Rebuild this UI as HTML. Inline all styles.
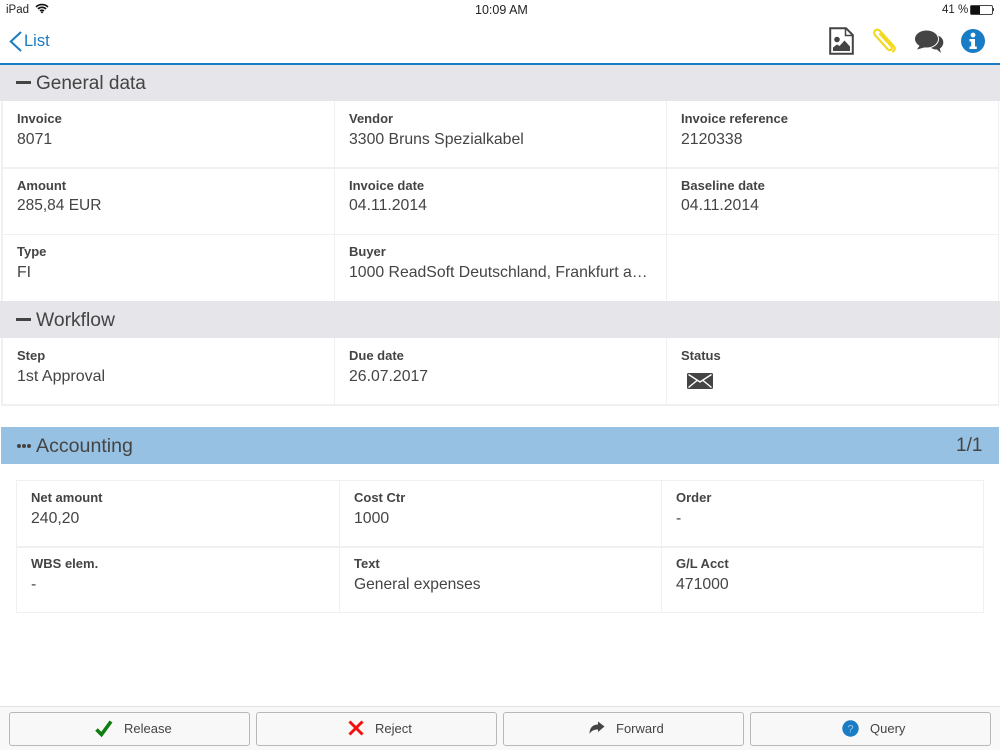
<!DOCTYPE html>
<html><head><meta charset="utf-8"><style>
html,body{margin:0;padding:0;background:#fff}
#p{position:relative;width:1000px;height:750px;overflow:hidden;background:#fff;font-family:"Liberation Sans",sans-serif;color:#444}
#p div,#p svg{position:absolute}
.t{white-space:nowrap}
.l{font-size:13px;font-weight:bold;line-height:16px;color:#444;white-space:nowrap}
.v{font-size:15.8px;line-height:20px;color:#444;white-space:nowrap}
.h{font-size:19.3px;line-height:24px;color:#444;white-space:nowrap}
.g{background:#f0f0f2}
.s{background:#e5e5ea;height:36px;left:0;width:1000px}
.b{top:712px;width:239px;height:32px;border:1px solid #b8b8b8;border-radius:3px;background:#f8f8f8}
.bt{top:721px;font-size:13px;line-height:16px;color:#444;white-space:nowrap}
</style></head><body><div id="p">
<div class="t" style="left:6px;top:3px;font-size:11.5px;line-height:14px;color:#222">iPad</div>
<svg style="left:35px;top:3px" width="14" height="11" viewBox="0 0 14 11"><path d="M1 4a8.5 8.5 0 0 1 12 0M3 6a5.7 5.7 0 0 1 8 0M5 8a2.8 2.8 0 0 1 4 0" fill="none" stroke="#111" stroke-width="1.6"/><path d="M7 10.5L5.6 9a2 2 0 0 1 2.8 0z" fill="#111"/></svg>
<div class="t" style="left:475px;top:3px;font-size:12.5px;line-height:14px;color:#222">10:09 AM</div>
<div class="t" style="left:942px;top:3px;font-size:11.5px;line-height:14px;color:#222">41 %</div>
<div style="left:970px;top:5px;width:21px;height:8px;border:1px solid #444;border-radius:2px"></div>
<div style="left:971px;top:6px;width:9px;height:8px;background:#111"></div>
<div style="left:993px;top:8px;width:1px;height:3px;background:#444"></div>

<svg style="left:9px;top:31px" width="14" height="21" viewBox="0 0 14 21"><path d="M12 1L1.8 10.5L12 20" fill="none" stroke="#1a7cc4" stroke-width="2"/></svg>
<div class="t" style="left:24px;top:30px;font-size:16.5px;line-height:22px;color:#1a7cc4">List</div>

<svg style="left:829px;top:27px" width="25" height="28" viewBox="0 0 25 28"><path d="M1.2 1.2H17L23.8 8V26.8H1.2Z" fill="#fff" stroke="#444" stroke-width="2"/><path d="M16.5 2V8.5H23" fill="none" stroke="#444" stroke-width="1.5"/><circle cx="8" cy="12.5" r="2.8" fill="#444"/><path d="M4 24V20.5L8 17.5L10.5 19L15.5 13.5L21 19.5V24Z" fill="#444"/></svg>
<svg style="left:873px;top:28px" width="24" height="26" viewBox="0 0 24 26"><path d="M20 23.5C22.5 21.5 22 19.5 20.5 18L7.5 3.5C5.8 1.3 3.6 1.2 2.2 2.5C.7 4 1 6 2.5 7.7L14.5 21C15.8 22.4 17.3 22.5 18.3 21.5C19.3 20.5 19 19.2 18 18L7 6" fill="none" stroke="#f4d81c" stroke-width="2.1" stroke-linecap="round"/></svg>
<svg style="left:914px;top:30px" width="30" height="24" viewBox="0 0 30 24"><ellipse cx="22" cy="12.5" rx="7.3" ry="7" fill="#444"/><path d="M20 17L27 23L25 16Z" fill="#444"/><ellipse cx="12.5" cy="9" rx="12" ry="9" fill="#444" stroke="#fff" stroke-width="1"/><path d="M6 15L3 19.5L12 17Z" fill="#444"/></svg>
<svg style="left:961px;top:29px" width="24" height="24" viewBox="0 0 24 24"><circle cx="12" cy="12" r="12" fill="#1a7cc4"/><circle cx="12" cy="6" r="2.4" fill="#fff"/><path d="M8.5 10H14V17.5H15.8V20H8.5V17.5H10.2V12.5H8.5Z" fill="#fff"/></svg>

<div style="left:0;top:63px;width:1000px;height:2px;background:#1a7cc4"></div>

<div class="s" style="top:65px"></div>
<div style="left:16px;top:81px;width:15px;height:3px;background:#444"></div>
<div class="h" style="left:36px;top:72px;font-size:19px">General data</div>

<div class="g" style="left:1px;top:101px;width:1.5px;height:200px"></div>
<div class="g" style="left:333.5px;top:101px;width:1.5px;height:200px"></div>
<div class="g" style="left:665.5px;top:101px;width:1.5px;height:200px"></div>
<div class="g" style="left:997.5px;top:101px;width:1.5px;height:200px"></div>
<div class="g" style="left:1px;top:167px;width:998px;height:1.5px"></div>
<div class="g" style="left:1px;top:233.5px;width:998px;height:1.5px"></div>

<div class="l" style="left:17px;top:111px">Invoice</div><div class="v" style="left:17px;top:130px">8071</div>
<div class="l" style="left:349px;top:111px">Vendor</div><div class="v" style="left:349px;top:130px">3300 Bruns Spezialkabel</div>
<div class="l" style="left:681px;top:111px">Invoice reference</div><div class="v" style="left:681px;top:130px">2120338</div>
<div class="l" style="left:17px;top:178px">Amount</div><div class="v" style="left:17px;top:196px;font-size:15.5px">285,84 EUR</div>
<div class="l" style="left:349px;top:178px">Invoice date</div><div class="v" style="left:349px;top:196px">04.11.2014</div>
<div class="l" style="left:681px;top:178px">Baseline date</div><div class="v" style="left:681px;top:196px">04.11.2014</div>
<div class="l" style="left:17px;top:244px">Type</div><div class="v" style="left:17px;top:263px">FI</div>
<div class="l" style="left:349px;top:244px">Buyer</div><div class="v" style="left:349px;top:263px">1000 ReadSoft Deutschland, Frankfurt a…</div>

<div class="s" style="top:301px;height:37px"></div>
<div style="left:16px;top:318px;width:15px;height:3px;background:#444"></div>
<div class="h" style="left:36px;top:309px">Workflow</div>

<div class="g" style="left:1px;top:338px;width:1.5px;height:67px"></div>
<div class="g" style="left:333.5px;top:338px;width:1.5px;height:67px"></div>
<div class="g" style="left:665.5px;top:338px;width:1.5px;height:67px"></div>
<div class="g" style="left:997.5px;top:338px;width:1.5px;height:67px"></div>
<div class="g" style="left:1px;top:404px;width:998px;height:1.5px"></div>
<div class="l" style="left:17px;top:348px">Step</div><div class="v" style="left:17px;top:367px;font-size:16px">1st Approval</div>
<div class="l" style="left:349px;top:348px">Due date</div><div class="v" style="left:349px;top:367px">26.07.2017</div>
<div class="l" style="left:681px;top:348px">Status</div>
<svg style="left:687px;top:373px" width="26" height="16" viewBox="0 0 26 16"><rect width="26" height="16" rx="1.5" fill="#444"/><path d="M1.5 1.5L13 9L24.5 1.5M1.5 14.5L10 7.5M24.5 14.5L16 7.5" fill="none" stroke="#fff" stroke-width="1.4"/></svg>

<div style="left:1px;top:427px;width:998px;height:37px;background:#97c1e2"></div>
<div style="left:17px;top:444px;width:3.6px;height:3.6px;border-radius:2px;background:#444"></div>
<div style="left:22px;top:444px;width:3.6px;height:3.6px;border-radius:2px;background:#444"></div>
<div style="left:27px;top:444px;width:3.6px;height:3.6px;border-radius:2px;background:#444"></div>
<div class="h" style="left:36px;top:434px;font-size:19.6px">Accounting</div>
<div class="t" style="left:956px;top:434px;font-size:19px;line-height:24px;color:#444">1/1</div>

<div style="left:16px;top:480px;width:966px;height:131px;border:1px solid #f0f0f2"></div>
<div class="g" style="left:338.5px;top:480px;width:1.5px;height:132px"></div>
<div class="g" style="left:660.5px;top:480px;width:1.5px;height:132px"></div>
<div class="g" style="left:16px;top:546px;width:968px;height:1.5px"></div>
<div class="l" style="left:31px;top:490px">Net amount</div><div class="v" style="left:31px;top:509px">240,20</div>
<div class="l" style="left:354px;top:490px">Cost Ctr</div><div class="v" style="left:354px;top:509px">1000</div>
<div class="l" style="left:676px;top:490px">Order</div><div class="v" style="left:676px;top:509px">-</div>
<div class="l" style="left:31px;top:556px">WBS elem.</div><div class="v" style="left:31px;top:575px">-</div>
<div class="l" style="left:354px;top:556px">Text</div><div class="v" style="left:354px;top:575px;font-size:15.6px">General expenses</div>
<div class="l" style="left:676px;top:556px">G/L Acct</div><div class="v" style="left:676px;top:575px">471000</div>

<div style="left:0;top:706px;width:1000px;height:44px;background:#f8f8f8;border-top:1px solid #e3e3e3;box-sizing:border-box"></div>
<div class="b" style="left:9px"></div>
<div class="b" style="left:256px"></div>
<div class="b" style="left:503px"></div>
<div class="b" style="left:750px"></div>
<svg style="left:95px;top:720px" width="18" height="17" viewBox="0 0 18 17"><path d="M1.5 9.5L6.5 14.5L16 1.5" fill="none" stroke="#0f7d0f" stroke-width="3.6"/></svg>
<div class="bt" style="left:124px">Release</div>
<svg style="left:348px;top:720px" width="16" height="16" viewBox="0 0 16 16"><path d="M1.5 1.5L14.5 14.5M14.5 1.5L1.5 14.5" stroke="#f40f0f" stroke-width="3" fill="none"/></svg>
<div class="bt" style="left:375px">Reject</div>
<svg style="left:589px;top:721px" width="16" height="14" viewBox="0 0 16 14"><path d="M15.5 5.5L9 .5V3.5C4 3.5 .5 6.5 .5 13C2.5 9.5 5 8.5 9 8.5V11Z" fill="#444"/></svg>
<div class="bt" style="left:616px">Forward</div>
<svg style="left:842px;top:720px" width="17" height="17" viewBox="0 0 17 17"><circle cx="8.5" cy="8.5" r="8.2" fill="#1a7cc4"/><text x="8.5" y="12.5" font-size="11" text-anchor="middle" fill="#9cc8e8" font-family="Liberation Sans">?</text></svg>
<div class="bt" style="left:870px">Query</div>
</div></body></html>
